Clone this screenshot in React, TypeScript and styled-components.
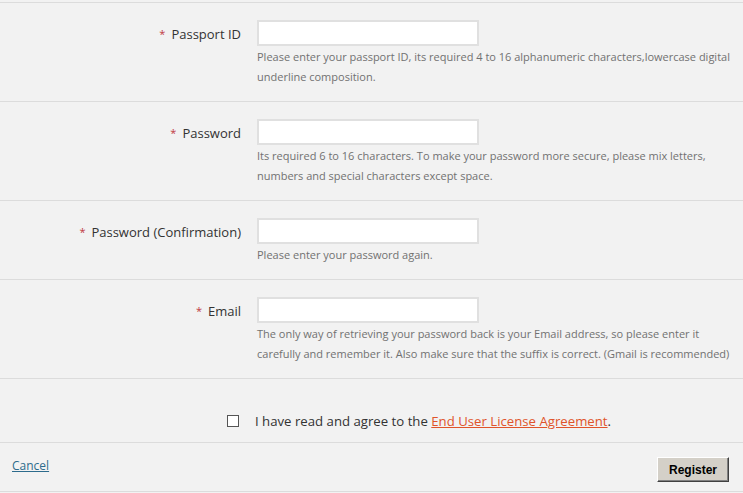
import React from "react";
import styled, { createGlobalStyle } from "styled-components";

const Global = createGlobalStyle`
  html, body { margin: 0; padding: 0; background: #f2f2f2; }
  body { font-family: "Open Sans", "Liberation Sans", sans-serif; }
`;

const Page = styled.div`
  padding-top: 2px;
  width: 743px;
  background: #f2f2f2;
`;

const Row = styled.div`
  display: grid;
  grid-template-columns: 241px 1fr;
  column-gap: 16px;
  border-top: 1px solid #dcdcdc;
  padding: 17px 0 15px;
`;

const Label = styled.label`
  text-align: right;
  font-size: 13px;
  color: #333;
  height: 26px;
  line-height: 28px;
  white-space: nowrap;
`;

const Star = styled.span`
  color: #c0393f;
  font-size: 11px;
  vertical-align: 1px;
  margin-right: 6px;
`;

const Field = styled.div`
  display: flex;
  flex-direction: column;
`;

const Input = styled.input`
  box-sizing: border-box;
  width: 222px;
  height: 26px;
  border: 2px solid #e0e0e0;
  background: #fff;
  margin: 0;
  outline: none;
`;

const Hint = styled.div`
  font-size: 11px;
  line-height: 20px;
  color: #717171;
  white-space: nowrap;
  padding-top: 1px;
  margin-bottom: -1px;
`;

const AgreeRow = styled.div`
  border-top: 1px solid #dcdcdc;
  height: 64px;
  display: flex;
  align-items: center;
  padding: 33px 0 12px 227px;
  box-sizing: border-box;
  font-size: 13.2px;
  line-height: 18px;
  color: #333;
`;

const Check = styled.span`
  box-sizing: border-box;
  width: 12px;
  height: 12px;
  border: 1px solid #555;
  background: #fff;
  margin-right: 16px;
`;

const Link = styled.a`
  color: #e0542a;
  text-decoration: underline;
`;

const Footer = styled.div`
  border-top: 1px solid #dcdcdc;
  border-bottom: 1px solid #dcdcdc;
  height: 50px;
  box-sizing: border-box;
  display: flex;
  align-items: flex-start;
  justify-content: space-between;
  padding: 14px 14px 0 12px;
`;

const Cancel = styled.a`
  color: #2d6b8c;
  font-size: 12px;
  line-height: 18px;
  text-decoration: underline;
`;

const Button = styled.button`
  font-family: "Liberation Sans", Arial, sans-serif;
  font-weight: bold;
  font-size: 12px;
  color: #000;
  background: #d4d0c8;
  width: 72px;
  height: 25px;
  padding: 0;
  border: 1px solid;
  border-color: #fff #404040 #404040 #fff;
  box-shadow: inset -1px -1px 0 #808080;
`;

const fields = [
  {
    label: "Passport ID",
    hints: [
      "Please enter your passport ID, its required 4 to 16 alphanumeric characters,lowercase digital",
      "underline composition.",
    ],
  },
  {
    label: "Password",
    hints: [
      "Its required 6 to 16 characters. To make your password more secure, please mix letters,",
      "numbers and special characters except space.",
    ],
  },
  { label: "Password (Confirmation)", hints: ["Please enter your password again."] },
  {
    label: "Email",
    hints: [
      "The only way of retrieving your password back is your Email address, so please enter it",
      "carefully and remember it. Also make sure that the suffix is correct. (Gmail is recommended)",
    ],
  },
];

export default function App() {
  return (
    <Page>
      <Global />
      {fields.map((f) => (
        <Row key={f.label}>
          <Label>
            <Star>*</Star>
            {f.label}
          </Label>
          <Field>
            <Input type="text" />
            {f.hints.map((h) => (
              <Hint key={h}>{h}</Hint>
            ))}
          </Field>
        </Row>
      ))}
      <AgreeRow>
        <Check />
        <span>
          I have read and agree to the <Link href="#">End User License Agreement</Link>.
        </span>
      </AgreeRow>
      <Footer>
        <Cancel href="#">Cancel</Cancel>
        <Button>Register</Button>
      </Footer>
    </Page>
  );
}
